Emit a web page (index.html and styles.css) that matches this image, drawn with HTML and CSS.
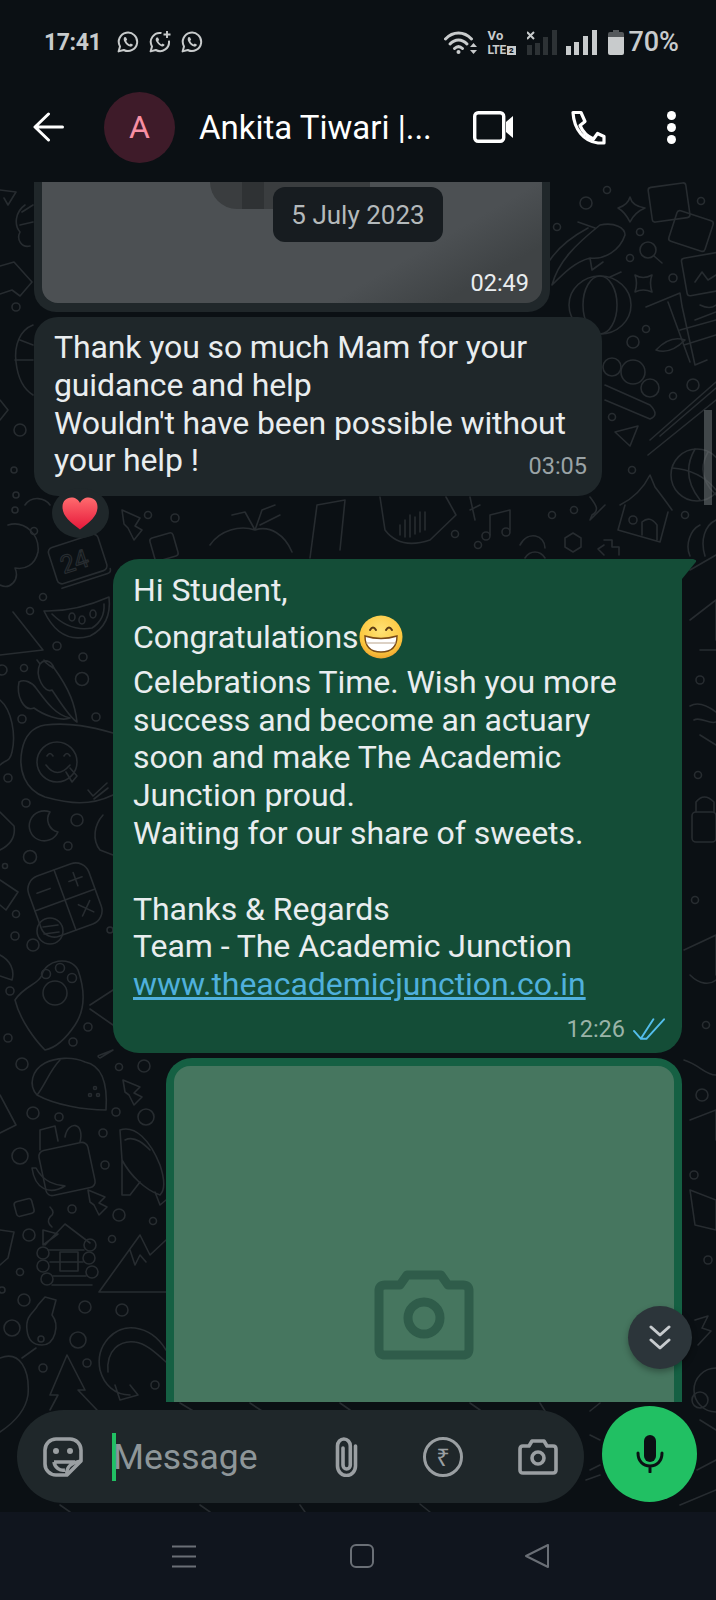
FILE: index.html
```html
<!DOCTYPE html>
<html>
<head>
    <meta charset="utf-8">
    <title>Ankita Tiwari - Chat</title>
    <link rel="stylesheet" href="styles.css">
</head>
<body>
<div class="phone">

    <header class="top">
        <svg class="defs" width="0" height="0">
            <symbol id="wa" viewBox="0 0 22 22">
                <path d="M1.6 20.4 L3 15.4 A9.2 9.2 0 1 1 6.8 19 Z" fill="none" stroke="currentColor" stroke-width="2" stroke-linejoin="round"/>
                <path d="M7.6 6 C6.4 7 6.4 9 7.6 11 C9 13.4 10.8 15 13.2 15.6 C14.6 15.8 15.6 15 16 13.8 L13.8 12.4 L12.6 13.4 C11 12.8 9.8 11.4 9.2 9.8 L10.2 8.8 L9 6.2 Z" fill="currentColor"/>
            </symbol>
        </svg>
        <div class="status">
            <span class="clock">17:41</span>
            <svg class="wa wa-first"><use href="#wa"/></svg>
            <svg class="wa" viewBox="0 0 22 22">
                <path d="M12.5 2.1 A9 9 0 0 0 3 15.4 L1.6 20.4 L6.8 19 A9 9 0 0 0 19.9 9.6" fill="none" stroke="currentColor" stroke-width="2" stroke-linejoin="round"/>
                <path d="M7.6 6.6 C6.4 7.6 6.4 9.4 7.6 11 C9 13.4 10.8 14.8 13 15.4 C14.4 15.6 15.2 14.8 15.6 13.8 L13.6 12.4 L12.4 13.4 C11 12.8 9.8 11.4 9.2 10 L10.2 9 L9 6.6 Z" fill="currentColor"/>
                <path d="M18 0 V7 M14.5 3.5 H21.5" stroke="currentColor" stroke-width="1.9"/>
            </svg>
            <svg class="wa"><use href="#wa"/></svg>

            <div class="status-right">
                <svg class="wifi" viewBox="0 0 34 25" fill="none" stroke="#c8cbcc" stroke-width="3" stroke-linecap="round">
                    <path d="M1.5 9 C9 1 20 1 27.5 9"/>
                    <path d="M6 14 C11 8.5 18 8.5 23 14"/>
                    <path d="M10.5 18.5 C13 16 16 16 18.5 18.5"/>
                    <circle cx="14.5" cy="22" r="2" fill="#c8cbcc" stroke="none"/>
                    <path d="M26 17 L29.5 13 L33 17 Z M26 20 L29.5 24 L33 20 Z" fill="#c8cbcc" stroke="none"/>
                </svg>
                <div class="volte">
                    <span class="vo">Vo</span>
                    <span class="lte">LTE<b>2</b></span>
                </div>
                <svg class="bars bars-off" viewBox="0 0 30 25">
                    <path d="M0 2 L7 9 M7 2 L0 9" stroke="#c8cbcc" stroke-width="2"/>
                    <path d="M0 15h5v10h-5z M8 13h5v12h-5z M16 7h5v18h-5z M25 0h5v25h-5z" fill="#2d3235"/>
                </svg>
                <svg class="bars" viewBox="0 0 31 25">
                    <path d="M0 16h5v9h-5z M8 12h5v13h-5z M17 6h5v19h-5z M26 0h5v25h-5z" fill="#c8cbcc"/>
                </svg>
                <svg class="battery" viewBox="0 0 16 25">
                    <path d="M5 0h6v2h-6z" fill="#55595c"/>
                    <path d="M2 2h12a2 2 0 0 1 2 2v3h-16v-3a2 2 0 0 1 2-2z" fill="#55595c"/>
                    <path d="M0 7h16v16a2 2 0 0 1-2 2h-12a2 2 0 0 1-2-2z" fill="#c8cbcc"/>
                </svg>
                <span class="percent">70%</span>
            </div>
        </div>

        <div class="toolbar">
            <svg class="back" viewBox="0 0 31 30" fill="none" stroke="#fff" stroke-width="3" stroke-linecap="round" stroke-linejoin="round">
                <path d="M29.5 15 H2.5 M15.5 2 L2 15 L15.5 28"/>
            </svg>
            <div class="avatar">A</div>
            <div class="name">Ankita Tiwari |...</div>
            <svg class="video" viewBox="0 0 40 32" fill="none">
                <rect x="1.7" y="1.7" width="29" height="28.6" rx="3.5" stroke="#fff" stroke-width="3.4"/>
                <path d="M33 11 L40 5 V27 L33 21 Z" fill="#fff"/>
            </svg>
            <svg class="call" viewBox="0 0 35 35" fill="none" stroke="#fff" stroke-width="3.2" stroke-linejoin="round">
                <path d="M2.5 2.5 H10.5 L14.5 11.5 L9.5 15.5 C12.5 22.5 16.5 26.5 23 29 L27 23.5 L33.5 26.5 V33 H27.5 C13.5 31.5 3.5 19.5 2.5 2.5 Z"/>
            </svg>
            <div class="dots"><i></i><i></i><i></i></div>
        </div>
    </header>

    <main class="chat">
        <!-- wallpaper doodles, coordinates are page coordinates -->
        <svg class="wall" viewBox="0 182 716 1330" fill="none" stroke="#272c30" stroke-width="1.6" stroke-linecap="round" stroke-linejoin="round">
            <!-- left strip, top -->
            <path d="M0 190 L16 192 L8 205 L4 198 M25 205 C15 212 14 225 20 232 C16 240 22 248 30 246 M22 212 L33 205 M20 225 L33 222"/>
            <path d="M0 266 L14 262 L32 282 L20 296 L12 290 L0 294"/>
            <circle cx="16" cy="307" r="4"/>
            <path d="M33 325 C20 330 14 345 16 362 C18 380 25 390 33 395 M15 360 H33 M20 340 L33 345"/>
            <circle cx="20" cy="430" r="6"/><circle cx="14" cy="470" r="3"/><circle cx="16" cy="495" r="3"/>
            <path d="M0 400 L8 410 L0 420"/>
            <!-- left strip, middle -->
            <path d="M25 505 C32 495 45 498 50 505 M8 525 C25 520 40 535 38 552 C35 565 25 570 15 568 C20 580 10 590 0 585"/>
            <circle cx="15" cy="510" r="3"/><circle cx="34" cy="531" r="3.5"/><circle cx="43" cy="597" r="3.5"/><circle cx="30" cy="611" r="3.5"/>
            <g transform="rotate(-18 78 560)">
                <rect x="52" y="540" width="52" height="38" rx="5"/>
                <path d="M54 582 H102 Q106 582 106 578"/>
                <text x="60" y="569" font-family="Roboto, sans-serif" font-size="25" stroke-width="1.2">24</text>
            </g>
            <path d="M44 611 Q75 612 109 597 Q112 625 90 636 Q60 645 44 611 Z M52 614 Q70 632 92 628 Q105 620 104 604"/>
            <ellipse cx="72" cy="617" rx="3" ry="4"/><ellipse cx="82" cy="620" rx="3" ry="4"/><ellipse cx="93" cy="614" rx="3" ry="4"/>
            <path d="M0 655 L43 650 L13 612"/>
            <circle cx="57" cy="646" r="4"/><circle cx="83" cy="657" r="4"/><circle cx="82" cy="679" r="6.5"/><circle cx="24" cy="668" r="3.5"/><circle cx="2" cy="670" r="5"/>
            <path d="M40 664 C34 676 45 694 52 690 C60 702 70 718 77 722 C75 705 70 690 54 668 C51 660 44 659 40 664 Z M40 664 L37 660 M44 660 C46 665 50 665 53 668"/>
            <path d="M19 682 C16 696 24 712 34 708 C42 714 60 722 70 718 C55 715 45 700 36 688 C32 682 24 679 19 682 Z"/>
            <circle cx="96" cy="717" r="4"/><circle cx="22" cy="719" r="4"/>
            <path d="M0 700 C12 710 16 735 12 752 C10 762 5 760 0 765"/>
            <path d="M45 725 C70 722 92 727 113 733 M113 795 C90 806 70 804 45 797 C25 790 18 770 22 750 C25 735 33 727 45 725"/>
            <circle cx="57" cy="762" r="20"/>
            <path d="M46 765 Q57 780 70 765 M47 756 Q50 751 53 756 M64 756 Q67 751 70 756 M66 772 L72 782 L77 776 L70 768"/>
            <path d="M88 790 L93 796 L107 783 M94 799 L108 788"/>
            <circle cx="8" cy="778" r="4"/><circle cx="26" cy="803" r="4"/>
            <path d="M50 812 A15 15 0 1 0 58 832 A13 13 0 0 1 50 812 Z"/>
            <path d="M0 812 L14 826 C16 838 10 845 0 850"/>
            <circle cx="77" cy="820" r="6"/><circle cx="68" cy="846" r="4"/><circle cx="30" cy="857" r="6.5"/><circle cx="5" cy="866" r="2.5"/>
            <path d="M103 815 C94 825 92 840 100 850 L113 855"/>
            <g transform="rotate(-20 65 900)">
                <rect x="33" y="868" width="64" height="64" rx="14"/>
                <path d="M65 868 V932 M33 900 H97 M75 884 H89 M82 877 V891 M41 884 H55 M76 909 L88 921 M88 909 L76 921"/>
            </g>
            <circle cx="50" cy="931" r="13"/><path d="M43 927 L58 925 M44 934 L59 932"/>
            <path d="M0 880 L18 892 L6 910 L0 905"/>
            <circle cx="16" cy="914" r="3.5"/><circle cx="15" cy="936" r="4"/><circle cx="33" cy="945" r="6"/><circle cx="110" cy="930" r="3"/>
            <!-- left strip, lower -->
            <path d="M15 1000 C25 985 38 985 42 975 C45 960 70 955 78 970 C85 990 85 1010 75 1025 C65 1040 55 1048 45 1050 C35 1040 20 1020 15 1000 Z"/>
            <circle cx="55" cy="993" r="12"/><circle cx="46" cy="974" r="4.5"/><circle cx="60" cy="968" r="4.5"/><circle cx="72" cy="978" r="4.5"/>
            <path d="M0 955 C10 960 15 970 12 980 L0 976"/>
            <circle cx="10" cy="991" r="4"/><circle cx="8" cy="1038" r="4"/><circle cx="73" cy="1042" r="4"/><circle cx="88" cy="1027" r="4"/>
            <path d="M90 1005 L113 990 M90 1009 L113 1025 M100 1055 L113 1050 L100 1058 Q96 1056 100 1055 Z"/>
            <circle cx="22" cy="1064" r="6"/><circle cx="119" cy="1067" r="3.5"/><circle cx="144" cy="1066" r="6"/>
            <path d="M37 1095 C28 1085 32 1070 45 1063 C55 1058 72 1056 85 1062 C100 1065 108 1080 106 1110 C85 1110 55 1105 37 1095 Z M37 1095 C45 1085 50 1070 60 1060"/>
            <circle cx="90" cy="1095" r="1.5"/><circle cx="95" cy="1088" r="1.5"/><circle cx="98" cy="1095" r="1.5"/>
            <path d="M0 1095 L16 1125 L0 1133"/>
            <circle cx="33" cy="1113" r="6"/><circle cx="59" cy="1117" r="4"/><circle cx="116" cy="1112" r="4"/><circle cx="146" cy="1117" r="8"/><circle cx="103" cy="1133" r="4"/><circle cx="105" cy="1165" r="4"/><circle cx="20" cy="1156" r="8"/>
            <path d="M123 1080 L140 1087 L134 1093 L142 1097 L134 1105 L129 1095 L125 1092 Z"/>
            <path d="M88 1190 L105 1197 L99 1203 L107 1207 L99 1215 L94 1205 L90 1202 Z"/>
            <rect x="42" y="1146" width="50" height="46" rx="6" transform="rotate(-12 67 1169)"/>
            <path d="M40 1150 L40 1130 L55 1126 L58 1141 M65 1137 C68 1120 85 1122 80 1142"/>
            <path d="M32 1168 C35 1190 50 1195 65 1186 C60 1185 45 1185 36 1168 Z"/>
            <path d="M120 1130 C135 1125 150 1140 160 1165 C165 1180 165 1190 160 1195 C145 1190 130 1175 122 1160 Z M122 1160 L122 1195 L130 1195 L140 1182 M155 1192 L160 1205 L166 1200 M125 1140 C135 1135 145 1145 150 1150"/>
            <rect x="15" y="1200" width="18" height="15" rx="3" transform="rotate(-15 24 1207)"/>
            <circle cx="72" cy="1209" r="4"/><circle cx="119" cy="1215" r="6"/><circle cx="153" cy="1221" r="3.5"/><circle cx="29" cy="1235" r="6"/><circle cx="112" cy="1239" r="3.5"/><circle cx="20" cy="1272" r="3.5"/><circle cx="2" cy="1290" r="3"/>
            <path d="M0 1230 L14 1232 L8 1258 L0 1265"/>
            <path d="M50 1207 q6 6 0 10 q-4 5 2 10 M45 1245 L65 1224 L90 1243 M43 1230 L43 1245 L58 1234 Z"/>
            <circle cx="43" cy="1253" r="6"/><circle cx="43" cy="1266" r="6"/><circle cx="47" cy="1279" r="6"/><circle cx="90" cy="1245" r="6"/><circle cx="89" cy="1258" r="6"/><circle cx="92" cy="1272" r="6"/>
            <path d="M48 1250 H84 M50 1262 H83 M53 1276 H86 M52 1285 H92"/>
            <rect x="60" y="1252" width="18" height="19"/>
            <path d="M99 1292 L140 1235 L150 1255 L166 1240 M99 1292 H166 M130 1250 L135 1265 L140 1255 L146 1262"/>
            <circle cx="24" cy="1300" r="6"/><circle cx="85" cy="1307" r="6"/><circle cx="122" cy="1310" r="6"/><circle cx="12" cy="1328" r="8"/><circle cx="78" cy="1340" r="8"/><circle cx="43" cy="1368" r="4"/><circle cx="87" cy="1363" r="4"/><circle cx="155" cy="1385" r="4"/>
            <path d="M27 1330 C25 1315 35 1312 38 1305 L45 1297 L56 1300 L52 1315 C60 1325 55 1345 42 1345 C33 1345 28 1340 27 1330 Z M36 1348 L22 1358"/>
            <circle cx="41" cy="1339" r="3"/>
            <path d="M0 1358 C20 1350 30 1370 28 1395 C26 1408 18 1420 0 1432"/>
            <path d="M100 1370 C95 1345 115 1325 135 1328 C150 1330 160 1340 166 1350 M108 1372 C106 1350 120 1340 135 1342 C145 1343 155 1352 166 1362 M100 1370 C104 1385 115 1395 130 1395 M115 1385 L120 1400 L138 1395 L130 1385"/>
            <path d="M67 1355 L50 1395 L58 1395 L50 1410 M67 1355 L85 1390 L78 1390 L97 1410"/>
            <!-- right strip, top -->
            <path d="M552 285 C558 262 575 245 600 225 C615 222 625 228 625 235 C620 250 605 260 590 258 C575 262 565 272 552 285 Z M578 222 L595 228 M590 258 L592 270 L603 262 M550 260 C560 245 575 235 588 228"/>
            <circle cx="586" cy="203" r="6"/><circle cx="607" cy="190" r="3.5"/><circle cx="557" cy="227" r="3.5"/><circle cx="640" cy="232" r="3.5"/><circle cx="630" cy="258" r="3.5"/><circle cx="701" cy="201" r="3.5"/>
            <path d="M630 197 Q632 206 645 208 Q635 212 630 222 Q625 212 618 208 Q628 205 630 197 Z"/>
            <path d="M635 275 Q643 280 652 275 Q649 283 652 292 Q643 288 635 292 Q638 283 635 275 Z"/>
            <circle cx="648" cy="250" r="8"/><path d="M654 256 L662 263"/>
            <rect x="650" y="185" width="38" height="35" rx="3" transform="rotate(-8 669 202)"/>
            <rect x="672" y="215" width="38" height="32" rx="3" transform="rotate(18 691 231)"/>
            <rect x="684" y="255" width="40" height="38" rx="3" transform="rotate(-10 704 274)"/>
            <path d="M695 282 L702 272 L708 280 L716 275"/>
            <circle cx="673" cy="278" r="4"/>
            <ellipse cx="600" cy="305" rx="31" ry="29"/><ellipse cx="600" cy="305" rx="17" ry="29"/><path d="M610 277 L621 272"/>
            <path d="M646 307 L680 293 L682 306 L695 365 L707 360 M668 302 L690 362 M695 320 L716 312 M680 330 L716 320 M684 345 L716 335"/>
            <path d="M656 350 Q670 335 685 340 Q670 355 656 350 Z M700 305 Q710 310 716 305"/>
            <circle cx="646" cy="329" r="3.5"/><circle cx="633" cy="342" r="6"/><circle cx="669" cy="370" r="3.5"/><circle cx="693" cy="385" r="6"/><circle cx="673" cy="396" r="3.5"/><circle cx="612" cy="367" r="9"/><circle cx="633" cy="372" r="12"/><circle cx="650" cy="388" r="9"/><circle cx="612" cy="417" r="3.5"/>
            <path d="M605 385 L650 405 Q660 415 650 419 L605 400"/>
            <path d="M615 432 L638 426 L630 446 Z"/>
            <path d="M650 440 L716 382 M648 455 L716 400 M660 436 L716 388"/>
            <circle cx="697" cy="475" r="26"/><path d="M672 468 Q700 470 716 490 M695 449 Q680 475 700 500 M708 452 Q695 475 716 495"/>
            <circle cx="632" cy="470" r="3.5"/><circle cx="685" cy="515" r="3.5"/><circle cx="574" cy="510" r="3.5"/><circle cx="552" cy="515" r="3.5"/>
            <path d="M620 505 Q640 495 650 475 L655 487 Q665 500 672 510 M625 505 L618 530 L660 542 L668 512 M642 535 V522 Q650 515 657 525 V540"/>
            <circle cx="633" cy="520" r="4"/>
            <path d="M573 533 L581 538 L581 547 L573 552 L565 547 L565 538 Z"/>
            <path d="M604 540 L612 540 L612 547 L619 547 L619 555 M604 555 L598 549 L604 545"/>
            <path d="M590 497 C596 505 600 510 592 515 L590 520 L605 505"/>
            <path d="M700 525 C690 530 685 545 690 556 M716 520 C705 525 700 540 705 556"/>
            <!-- gap under the incoming bubble -->
            <path d="M122 510 L140 518 L135 526 L142 530 L134 540 L128 528 L124 524 Z"/>
            <rect x="152" y="535" width="24" height="24" rx="3" transform="rotate(-16 164 547)"/>
            <circle cx="148" cy="515" r="3.5"/><circle cx="175" cy="518" r="4"/>
            <path d="M210 545 C220 530 240 525 255 530 C270 525 285 535 292 552 M255 530 L262 510 L275 505 M255 530 L245 512 L232 515 M260 525 L280 515"/>
            <path d="M310 558 L317 505 L345 500 L340 550 M380 497 L385 530 Q400 550 430 540 L456 515 L446 497"/>
            <path d="M400 535 V525 M405 537 V520 M410 537 V515 M415 534 V517 M420 532 V512 M425 530 V512"/>
            <path d="M470 497 L475 520 M470 510 L480 505"/>
            <path d="M490 535 V515 L510 510 V530"/><circle cx="486" cy="536" r="4"/><circle cx="506" cy="532" r="4"/>
            <path d="M520 545 C528 530 545 535 545 548 M525 558 C530 550 540 550 545 558"/>
            <circle cx="455" cy="534" r="3.5"/><circle cx="478" cy="545" r="3.5"/>
            <!-- right strip, lower -->
            <path d="M690 570 L716 555 M690 620 L716 600 L716 640 M700 650 H716"/>
            <path d="M690 706 Q700 700 716 712 M694 720 C700 716 710 725 716 722 M700 735 L716 745"/>
            <circle cx="700" cy="680" r="4"/><circle cx="698" cy="775" r="3.5"/><circle cx="695" cy="900" r="3.5"/><circle cx="706" cy="1025" r="3.5"/><circle cx="702" cy="1095" r="6"/><circle cx="694" cy="1175" r="4"/><circle cx="708" cy="1260" r="4"/><circle cx="700" cy="1400" r="8"/>
            <rect x="692" y="812" width="24" height="30" rx="4"/><path d="M696 812 V802 Q704 792 714 802 V812"/>
            <path d="M684 950 L716 935 L716 975 M690 975 C700 985 710 985 716 980"/>
            <path d="M684 1060 C700 1065 705 1075 716 1075 M690 1120 L716 1110 L716 1140"/>
            <path d="M690 1190 L716 1200 L716 1230 L695 1225 Z"/>
            <path d="M695 1320 L708 1316 L702 1328 L711 1331 L698 1345"/>
            <circle cx="716" cy="1390" r="22"/>
            <!-- round the composer -->
            <path d="M590 1435 L600 1440 M590 1470 L600 1465 M586 1480 L600 1475 M300 1505 L305 1512 M420 1504 L430 1512 M200 1505 L210 1512 M60 1505 L70 1512"/>
            <path d="M700 1420 L716 1430 M697 1470 L716 1460 M680 1505 L716 1490"/>
            <path d="M180 1403 L195 1412 M250 1403 L262 1411 M340 1403 L350 1410 M470 1403 L480 1410 M540 1403 L545 1411 M600 1403 L590 1411"/>
        </svg>

        <div class="thread">
            <div class="photo-in">
                <div class="photo-pic">
                    <div class="photo-ghost"><i></i></div>
                    <span class="stamp-pic">02:49</span>
                </div>
            </div>

            <div class="bubble-in">
                <p class="msg-text">Thank you so much Mam for your<br>guidance and help<br>Wouldn't have been possible without<br>your help !</p>
                <div class="stamp">03:05</div>
            </div>
            <div class="reaction">
                <svg viewBox="0 0 36 33" width="36" height="33">
                    <defs>
                        <linearGradient id="heartFill" x1="0" y1="0" x2="0" y2="1">
                            <stop offset="0" stop-color="#ff6b6e"/>
                            <stop offset="1" stop-color="#e6183a"/>
                        </linearGradient>
                    </defs>
                    <path d="M18 32.5 C8 25 0.5 19 0.5 10 C0.5 4 4.5 0.5 9.5 0.5 C13 0.5 16.5 2.5 18 6 C19.5 2.5 23 0.5 26.5 0.5 C31.5 0.5 35.5 4 35.5 10 C35.5 19 28 25 18 32.5 Z" fill="url(#heartFill)"/>
                </svg>
            </div>

            <div class="bubble-out">
                <p class="msg-text">Hi Student,</p>
                <p class="msg-text grin-line">Congratulations<svg class="grin" viewBox="0 0 44 44">
                    <defs>
                        <radialGradient id="grinFill" cx="0.5" cy="0.35" r="0.7">
                            <stop offset="0" stop-color="#ffe275"/>
                            <stop offset="0.7" stop-color="#fcc83f"/>
                            <stop offset="1" stop-color="#ee9b2a"/>
                        </radialGradient>
                    </defs>
                    <circle cx="22" cy="22" r="21.5" fill="url(#grinFill)"/>
                    <path d="M11 15 Q14 10 17 15 M27 15 Q30 10 33 15" fill="none" stroke="#5c3a14" stroke-width="2" stroke-linecap="round"/>
                    <path d="M6 21 Q22 26 38 21 Q38 37 22 37 Q6 37 6 21 Z" fill="#fff" stroke="#7a4a18" stroke-width="1.4"/>
                    <path d="M7 28 H37" stroke="#b9a38a" stroke-width="1"/>
                </svg></p>
                <p class="msg-text">Celebrations Time. Wish you more<br>success and become an actuary<br>soon and make The Academic<br>Junction proud.<br>Waiting for our share of sweets.<br><br>Thanks &amp; Regards<br>Team - The Academic Junction<br><a class="link">www.theacademicjunction.co.in</a></p>
                <div class="meta">
                    <span>12:26</span>
                    <svg class="ticks" viewBox="0 0 33 23" fill="none" stroke="#53bdeb" stroke-width="2" stroke-linecap="round" stroke-linejoin="round">
                        <path d="M1 13 L8 21 L21 1 M14 21 L32 1 M8 21 L14 21"/>
                    </svg>
                </div>
            </div>

            <div class="photo-out">
                <div class="photo-green">
                    <svg class="photo-cam" viewBox="0 0 100 90" fill="none" stroke="#2f5c4a" stroke-width="9" stroke-linejoin="round">
                        <path d="M5 21 Q5 15 11 15 H26 L33 5 H67 L74 15 H89 Q95 15 95 21 V79 Q95 85 89 85 H11 Q5 85 5 79 Z"/>
                        <circle cx="50" cy="48" r="16"/>
                    </svg>
                </div>
            </div>
        </div>

        <div class="composer">
            <div class="input">
                <svg class="sticker" viewBox="0 0 40 40" fill="none" stroke="#9a9fa2" stroke-width="3.6" stroke-linejoin="round">
                    <path d="M13 2 H27 A11 11 0 0 1 38 13 V24 L24 38 H13 A11 11 0 0 1 2 27 V13 A11 11 0 0 1 13 2 Z"/>
                    <circle cx="13" cy="14" r="3" fill="#9a9fa2" stroke="none"/>
                    <circle cx="27" cy="14" r="3" fill="#9a9fa2" stroke="none"/>
                    <path d="M11 25 H32 M11 25 C12 31 17 34 22 33 M24 38 C23 30 27 26 38 24"/>
                </svg>
                <i class="cursor"></i>
                <span class="placeholder">Message</span>
                <svg class="attach" viewBox="0 0 25 40" fill="none" stroke="#9a9fa2" stroke-width="3.6" stroke-linecap="round">
                    <path d="M21.5 9 V29 A9 9.5 0 0 1 3.5 29 V9 A6.4 7 0 0 1 16.3 9 V28 A3.6 4 0 0 1 9 28 V11"/>
                </svg>
                <span class="rupee">₹</span>
                <svg class="cam" viewBox="0 0 40 36" fill="none" stroke="#9a9fa2" stroke-width="3.6" stroke-linejoin="round">
                    <path d="M2 10 Q2 7 5 7 H11 L14 2 H26 L29 7 H35 Q38 7 38 10 V31 Q38 34 35 34 H5 Q2 34 2 31 Z"/>
                    <circle cx="20" cy="19" r="6"/>
                </svg>
            </div>
            <div class="mic">
                <svg viewBox="0 0 28 38" width="28" height="38" fill="none" stroke="#0b1014" stroke-width="3" stroke-linecap="round">
                    <rect x="8" y="0" width="12" height="27" rx="6" fill="#0b1014" stroke="none"/>
                    <path d="M2 18 C2 26 7 31 14 31 C21 31 26 26 26 18 M14 31 V37"/>
                </svg>
            </div>
        </div>

        <div class="date-pill">5 July 2023</div>
        <div class="jump">
            <svg viewBox="0 0 22 25" width="22" height="25" fill="none" stroke="#c7cbce" stroke-width="3" stroke-linecap="round" stroke-linejoin="round">
                <path d="M2 2 L11 10 L20 2 M2 15 L11 23 L20 15"/>
            </svg>
        </div>
        <div class="scroll-thumb"></div>
    </main>

    <nav class="sysnav">
        <svg viewBox="0 0 24 23" width="24" height="23" stroke="#6a6f76" stroke-width="2">
            <path d="M0 1.5 H24 M0 11.5 H24 M0 21.5 H24"/>
        </svg>
        <svg viewBox="0 0 24 24" width="24" height="24" fill="none" stroke="#6a6f76" stroke-width="2">
            <rect x="1" y="1" width="22" height="22" rx="5"/>
        </svg>
        <svg class="nav-back" viewBox="0 0 24 24" width="24" height="24" fill="none" stroke="#6a6f76" stroke-width="2" stroke-linejoin="round">
            <path d="M23 1 V23 L1 12 Z"/>
        </svg>
    </nav>
</div>
</body>
</html>
```

FILE: styles.css
```css
body {
    margin: 0;
    background: #0b1014;
    font-family: Roboto, "Noto Sans", sans-serif;
    color: #e9edef;
}
.phone {
    width: 716px;
    height: 1600px;
    display: flex;
    flex-direction: column;
    overflow: hidden;
}
.defs {
    position: absolute;
}

/* status bar + toolbar */
.top {
    background: #0b1014;
    flex: none;
}
.status {
    height: 76px;
    padding: 4px 38px 0 44px;
    display: flex;
    align-items: center;
    color: #c8cbcc;
}
.clock {
    font-size: 23px;
    font-weight: 700;
    letter-spacing: -0.4px;
    width: 54px;
}
.wa {
    width: 22px;
    height: 22px;
    margin-left: 10px;
    color: #c8cbcc;
}
.wa-first {
    margin-left: 19px;
}
.status-right {
    margin-left: auto;
    display: flex;
    align-items: center;
}
.wifi {
    width: 34px;
    height: 25px;
}
.volte {
    margin-left: 9px;
    width: 31px;
    display: flex;
    flex-direction: column;
    font-weight: 700;
}
.vo {
    font-size: 13px;
    line-height: 15px;
    letter-spacing: 0.5px;
}
.lte {
    font-size: 12px;
    line-height: 14px;
    letter-spacing: -0.3px;
}
.volte b {
    display: inline-block;
    width: 9px;
    height: 9px;
    margin-left: 1px;
    background: #c8cbcc;
    color: #0b1014;
    font-size: 8px;
    letter-spacing: 0;
    line-height: 9px;
    text-align: center;
    vertical-align: 1px;
}
.bars {
    width: 31px;
    height: 25px;
    margin-left: 9px;
}
.bars-off {
    width: 30px;
}
.battery {
    width: 16px;
    height: 25px;
    margin-left: 11px;
}
.percent {
    font-size: 27px;
    font-weight: 500;
    margin-left: 4px;
    margin-right: -1px;
}
.toolbar {
    height: 94px;
    padding: 0 0 8px 33px;
    display: flex;
    align-items: center;
    color: #fff;
}
.back {
    width: 31px;
    height: 30px;
}
.avatar {
    width: 71px;
    height: 71px;
    margin-left: 40px;
    border-radius: 50%;
    background: #3e1b29;
    color: #f78fa3;
    font-size: 32px;
    display: flex;
    align-items: center;
    justify-content: center;
}
.name {
    margin-left: 24px;
    width: 232px;
    font-size: 33px;
    white-space: nowrap;
}
.video {
    width: 40px;
    height: 32px;
    margin-left: 42px;
}
.call {
    width: 36px;
    height: 35px;
    margin-left: 57px;
}
.dots {
    margin-left: 61px;
    display: flex;
    flex-direction: column;
    gap: 3px;
}
.dots i {
    display: block;
    width: 9px;
    height: 9px;
    border-radius: 50%;
    background: #fff;
}

/* chat area */
.chat {
    position: relative;
    flex: 1;
    min-height: 0;
    display: flex;
    flex-direction: column;
    background: #0b1014;
    overflow: hidden;
}
.wall {
    position: absolute;
    left: 0;
    top: 0;
    width: 716px;
    height: 1330px;
}
.thread {
    position: relative;
    flex: 1;
    min-height: 0;
    overflow: hidden;
}
.photo-in {
    width: 516px;
    height: 130px;
    margin-left: 34px;
    box-sizing: border-box;
    padding: 0 8px 9px 8px;
    background: #20272a;
    border-radius: 0 0 22px 22px;
}
.photo-pic {
    position: relative;
    height: 100%;
    background: linear-gradient(150deg, #4c5053 70%, #3f4345 86%);
    border-radius: 0 0 16px 16px;
    overflow: hidden;
}
.photo-ghost {
    position: absolute;
    left: 168px;
    top: 0;
    width: 160px;
    height: 27px;
    background: #3a3d3f;
    border-radius: 0 0 0 30px;
}
.photo-ghost i {
    display: block;
    width: 22px;
    height: 100%;
    margin-left: 32px;
    background: #2f3234;
}
.stamp-pic {
    position: absolute;
    right: 13px;
    bottom: 6px;
    font-size: 23.5px;
    line-height: 27px;
    color: #e9edef;
}
.bubble-in {
    width: 568px;
    height: 179px;
    margin: 5px 0 0 34px;
    box-sizing: border-box;
    padding: 12px 15px 0 20px;
    background: #1f272a;
    border-radius: 24px;
    position: relative;
}
.msg-text {
    margin: 0;
    font-size: 32px;
    line-height: 37.8px;
    letter-spacing: -0.12px;
    white-space: nowrap;
}
.stamp {
    margin-top: -27px;
    text-align: right;
    font-size: 23.5px;
    line-height: 27px;
    color: #9aa3a6;
}
.reaction {
    position: relative;
    width: 57px;
    height: 50px;
    margin: -8px 0 0 52px;
    box-sizing: border-box;
    padding-right: 2px;
    border-radius: 50%;
    background: #1f272a;
    display: flex;
    align-items: center;
    justify-content: center;
}
.bubble-out {
    position: relative;
    width: 569px;
    height: 494px;
    margin: 21px 0 0 113px;
    box-sizing: border-box;
    padding: 13px 17px 0 20px;
    background: #144d37;
    border-radius: 26px 0 26px 26px;
}
.bubble-out .msg-text {
    letter-spacing: -0.05px;
}
.bubble-out::after {
    content: "";
    position: absolute;
    left: 100%;
    top: 0;
    width: 14px;
    height: 20px;
    background: #144d37;
    clip-path: polygon(0 0, 80% 0, 100% 6%, 100% 14%, 0 100%);
}
.grin-line {
    line-height: 54px;
}
.grin {
    width: 44px;
    height: 44px;
    vertical-align: -11px;
}
.link {
    color: #4fb0dc;
    text-decoration: underline;
}
.meta {
    margin-top: 12px;
    display: flex;
    align-items: center;
    justify-content: flex-end;
    gap: 8px;
    font-size: 23.5px;
    line-height: 27px;
    color: #9ab3a8;
}
.ticks {
    width: 32px;
    height: 23px;
}
.photo-out {
    width: 516px;
    height: 400px;
    margin: 5px 0 0 166px;
    box-sizing: border-box;
    padding: 8px 8px 0 8px;
    background: #156043;
    border-radius: 26px 26px 0 0;
}
.photo-green {
    height: 100%;
    padding-top: 204px;
    box-sizing: border-box;
    display: flex;
    justify-content: center;
    background: #46765f;
    border-radius: 16px 16px 0 0;
}
.photo-cam {
    width: 100px;
    height: 90px;
}

/* input row */
.composer {
    position: relative;
    flex: none;
    height: 110px;
    box-sizing: border-box;
    padding: 4px 19px 0 17px;
    display: flex;
    align-items: flex-start;
    gap: 18px;
}
.input {
    width: 567px;
    height: 93px;
    margin-top: 4px;
    box-sizing: border-box;
    padding: 0 26px;
    background: #1f272a;
    border-radius: 47px;
    display: flex;
    align-items: center;
}
.sticker {
    width: 40px;
    height: 40px;
    flex: none;
}
.cursor {
    width: 4px;
    height: 48px;
    margin-left: 29px;
    background: #21c063;
    flex: none;
}
.placeholder {
    flex: 1;
    margin-left: -3px;
    font-size: 35.5px;
    color: #8e9699;
}
.attach {
    width: 25px;
    height: 40px;
    flex: none;
}
.rupee {
    width: 40px;
    height: 40px;
    margin-left: 64px;
    box-sizing: border-box;
    border: 3.5px solid #9a9fa2;
    border-radius: 50%;
    color: #9a9fa2;
    font-size: 24px;
    font-family: "Noto Sans", sans-serif;
    line-height: 33px;
    text-align: center;
    flex: none;
}
.cam {
    width: 40px;
    height: 36px;
    margin-left: 55px;
    flex: none;
}
.mic {
    width: 95px;
    height: 96px;
    border-radius: 50%;
    background: #21c063;
    display: flex;
    align-items: center;
    justify-content: center;
}

/* things lying over the chat */
.date-pill {
    position: absolute;
    left: 273px;
    top: 5px;
    width: 170px;
    height: 55px;
    border-radius: 12px;
    background: #171c20;
    color: #b4b9bb;
    font-size: 26px;
    display: flex;
    align-items: center;
    justify-content: center;
}
.jump {
    position: absolute;
    left: 628px;
    top: 1124px;
    width: 64px;
    height: 63px;
    border-radius: 50%;
    background: #2c353a;
    box-shadow: 0 3px 6px rgba(0, 0, 0, 0.3);
    display: flex;
    align-items: center;
    justify-content: center;
}
.scroll-thumb {
    position: absolute;
    left: 704px;
    top: 228px;
    width: 8px;
    height: 95px;
    background: rgba(120, 125, 128, 0.5);
}

/* android nav */
.sysnav {
    flex: none;
    height: 88px;
    box-sizing: border-box;
    padding: 0 0 0 172px;
    background: #10151e;
    display: flex;
    align-items: center;
    gap: 154px;
}
.nav-back {
    margin-left: -3px;
}
```
